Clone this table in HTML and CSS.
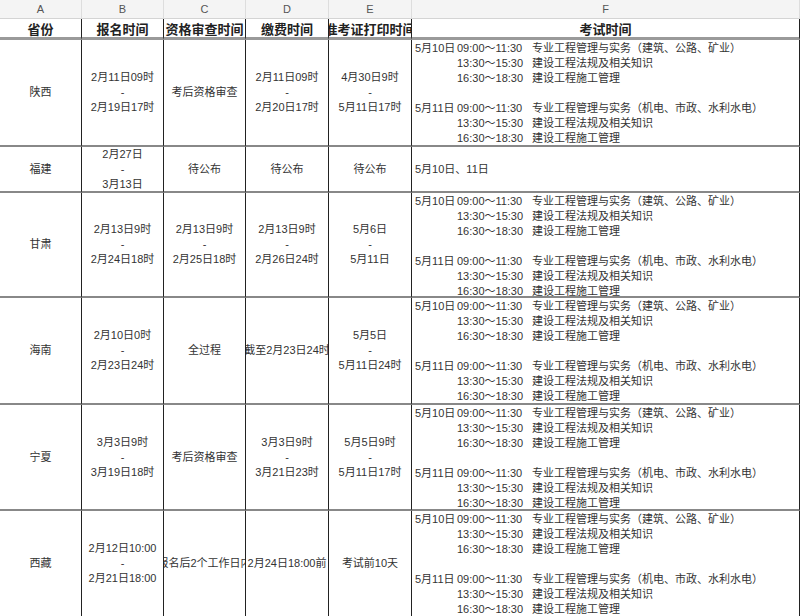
FILE: index.html
```html
<!DOCTYPE html>
<html lang="zh">
<head>
<meta charset="utf-8">
<title>考试时间表</title>
<link rel="stylesheet" href="styles.css">
</head>
<body>
<div class="sheet">
  <div class="col-h">A</div><div class="col-h">B</div><div class="col-h">C</div><div class="col-h">D</div><div class="col-h">E</div><div class="col-h last">F</div>

  <div class="hd">省份</div><div class="hd">报名时间</div><div class="hd">资格审查时间</div><div class="hd">缴费时间</div><div class="hd">准考证打印时间</div><div class="hd last">考试时间</div>

  <!-- 陕西 -->
  <div class="c">陕西</div>
  <div class="c"><span>2月11日09时</span><span>-</span><span>2月19日17时</span></div>
  <div class="c">考后资格审查</div>
  <div class="c"><span>2月11日09时</span><span>-</span><span>2月20日17时</span></div>
  <div class="c"><span>4月30日9时</span><span>-</span><span>5月11日17时</span></div>
  <div class="f">
    <div class="ln"><span class="d">5月10日</span><span class="t">09:00～11:30</span><span>专业工程管理与实务（建筑、公路、矿业）</span></div>
    <div class="ln"><span class="d"></span><span class="t">13:30～15:30</span><span>建设工程法规及相关知识</span></div>
    <div class="ln"><span class="d"></span><span class="t">16:30～18:30</span><span>建设工程施工管理</span></div>
    <div class="ln"></div>
    <div class="ln"><span class="d">5月11日</span><span class="t">09:00～11:30</span><span>专业工程管理与实务（机电、市政、水利水电）</span></div>
    <div class="ln"><span class="d"></span><span class="t">13:30～15:30</span><span>建设工程法规及相关知识</span></div>
    <div class="ln"><span class="d"></span><span class="t">16:30～18:30</span><span>建设工程施工管理</span></div>
  </div>

  <!-- 福建 -->
  <div class="c">福建</div>
  <div class="c"><span>2月27日</span><span>-</span><span>3月13日</span></div>
  <div class="c">待公布</div>
  <div class="c">待公布</div>
  <div class="c">待公布</div>
  <div class="f mid"><div class="ln">5月10日、11日</div></div>

  <!-- 甘肃 -->
  <div class="c">甘肃</div>
  <div class="c"><span>2月13日9时</span><span>-</span><span>2月24日18时</span></div>
  <div class="c"><span>2月13日9时</span><span>-</span><span>2月25日18时</span></div>
  <div class="c"><span>2月13日9时</span><span>-</span><span>2月26日24时</span></div>
  <div class="c"><span>5月6日</span><span>-</span><span>5月11日</span></div>
  <div class="f">
    <div class="ln"><span class="d">5月10日</span><span class="t">09:00～11:30</span><span>专业工程管理与实务（建筑、公路、矿业）</span></div>
    <div class="ln"><span class="d"></span><span class="t">13:30～15:30</span><span>建设工程法规及相关知识</span></div>
    <div class="ln"><span class="d"></span><span class="t">16:30～18:30</span><span>建设工程施工管理</span></div>
    <div class="ln"></div>
    <div class="ln"><span class="d">5月11日</span><span class="t">09:00～11:30</span><span>专业工程管理与实务（机电、市政、水利水电）</span></div>
    <div class="ln"><span class="d"></span><span class="t">13:30～15:30</span><span>建设工程法规及相关知识</span></div>
    <div class="ln"><span class="d"></span><span class="t">16:30～18:30</span><span>建设工程施工管理</span></div>
  </div>

  <!-- 海南 -->
  <div class="c">海南</div>
  <div class="c"><span>2月10日0时</span><span>-</span><span>2月23日24时</span></div>
  <div class="c">全过程</div>
  <div class="c">截至2月23日24时</div>
  <div class="c"><span>5月5日</span><span>-</span><span>5月11日24时</span></div>
  <div class="f">
    <div class="ln"><span class="d">5月10日</span><span class="t">09:00～11:30</span><span>专业工程管理与实务（建筑、公路、矿业）</span></div>
    <div class="ln"><span class="d"></span><span class="t">13:30～15:30</span><span>建设工程法规及相关知识</span></div>
    <div class="ln"><span class="d"></span><span class="t">16:30～18:30</span><span>建设工程施工管理</span></div>
    <div class="ln"></div>
    <div class="ln"><span class="d">5月11日</span><span class="t">09:00～11:30</span><span>专业工程管理与实务（机电、市政、水利水电）</span></div>
    <div class="ln"><span class="d"></span><span class="t">13:30～15:30</span><span>建设工程法规及相关知识</span></div>
    <div class="ln"><span class="d"></span><span class="t">16:30～18:30</span><span>建设工程施工管理</span></div>
  </div>

  <!-- 宁夏 -->
  <div class="c">宁夏</div>
  <div class="c"><span>3月3日9时</span><span>-</span><span>3月19日18时</span></div>
  <div class="c">考后资格审查</div>
  <div class="c"><span>3月3日9时</span><span>-</span><span>3月21日23时</span></div>
  <div class="c"><span>5月5日9时</span><span>-</span><span>5月11日17时</span></div>
  <div class="f">
    <div class="ln"><span class="d">5月10日</span><span class="t">09:00～11:30</span><span>专业工程管理与实务（建筑、公路、矿业）</span></div>
    <div class="ln"><span class="d"></span><span class="t">13:30～15:30</span><span>建设工程法规及相关知识</span></div>
    <div class="ln"><span class="d"></span><span class="t">16:30～18:30</span><span>建设工程施工管理</span></div>
    <div class="ln"></div>
    <div class="ln"><span class="d">5月11日</span><span class="t">09:00～11:30</span><span>专业工程管理与实务（机电、市政、水利水电）</span></div>
    <div class="ln"><span class="d"></span><span class="t">13:30～15:30</span><span>建设工程法规及相关知识</span></div>
    <div class="ln"><span class="d"></span><span class="t">16:30～18:30</span><span>建设工程施工管理</span></div>
  </div>

  <!-- 西藏 -->
  <div class="c">西藏</div>
  <div class="c"><span>2月12日10:00</span><span>-</span><span>2月21日18:00</span></div>
  <div class="c">报名后2个工作日内</div>
  <div class="c">2月24日18:00前</div>
  <div class="c">考试前10天</div>
  <div class="f">
    <div class="ln"><span class="d">5月10日</span><span class="t">09:00～11:30</span><span>专业工程管理与实务（建筑、公路、矿业）</span></div>
    <div class="ln"><span class="d"></span><span class="t">13:30～15:30</span><span>建设工程法规及相关知识</span></div>
    <div class="ln"><span class="d"></span><span class="t">16:30～18:30</span><span>建设工程施工管理</span></div>
    <div class="ln"></div>
    <div class="ln"><span class="d">5月11日</span><span class="t">09:00～11:30</span><span>专业工程管理与实务（机电、市政、水利水电）</span></div>
    <div class="ln"><span class="d"></span><span class="t">13:30～15:30</span><span>建设工程法规及相关知识</span></div>
    <div class="ln"><span class="d"></span><span class="t">16:30～18:30</span><span>建设工程施工管理</span></div>
  </div>
</div>
</body>
</html>
```

FILE: styles.css
```css
html, body {
  margin: 0;
  padding: 0;
  background: #ffffff;
}
body {
  font-family: "Liberation Sans", "Noto Sans CJK SC", sans-serif;
  font-size: 11px;
  color: #333333;
  overflow: hidden;
}
.sheet {
  display: grid;
  grid-template-columns: 82px 82px 82px 83px 83px 388px;
  grid-template-rows: 19px 21px 107px 46px 105px 107px 106px 107px;
  width: 800px;
}
.sheet > div {
  box-sizing: border-box;
  overflow: hidden;
  min-width: 0;
}
.col-h {
  background: #f4f4f4;
  color: #555555;
  font-size: 11px;
  display: flex;
  align-items: center;
  justify-content: center;
  border-right: 1px solid #dddddd;
  border-bottom: 1px solid #d4d4d4;
}
.hd {
  display: flex;
  align-items: center;
  justify-content: center;
  white-space: nowrap;
  font-family: "Noto Sans CJK SC", sans-serif;
  font-weight: bold;
  font-size: 13px;
  color: #222222;
  border-right: 1px solid #222222;
  border-bottom: 3px solid #9a9a9a;
  padding-top: 1px;
}
.c {
  display: flex;
  flex-direction: column;
  align-items: center;
  justify-content: center;
  white-space: nowrap;
  line-height: 15px;
  border-right: 1px solid #222222;
  border-bottom: 2px solid #888888;
}
.f {
  line-height: 15px;
  white-space: nowrap;
  padding: 1px 0 0 3px;
  border-right: 1px solid #222222;
  border-bottom: 2px solid #888888;
}
.f.mid {
  display: flex;
  align-items: center;
  padding-top: 0;
}
.ln {
  display: flex;
  height: 15px;
}
.d {
  width: 42px;
  flex: none;
}
.t {
  width: 75px;
  flex: none;
}
```
